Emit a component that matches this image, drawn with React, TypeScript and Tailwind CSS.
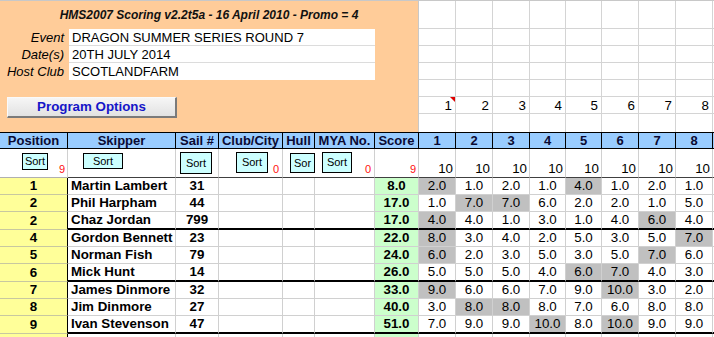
import React from "react";

const COLS =
  "grid grid-cols-[68px_108px_43px_64px_32px_60px_44px_37px_37px_37px_36px_36px_37px_37px_37px_1fr]";

type Row = {
  pos: string;
  name: string;
  sail: string;
  score: string;
  races: string[];
  thick?: boolean;
};

const data: Row[] = [
  { pos: "1", name: "Martin Lambert", sail: "31", score: "8.0", races: ["2.0*", "1.0", "2.0", "1.0", "4.0*", "1.0", "2.0", "1.0"] },
  { pos: "2", name: "Phil Harpham", sail: "44", score: "17.0", races: ["1.0", "7.0*", "7.0*", "6.0", "2.0", "2.0", "1.0", "5.0"] },
  { pos: "2", name: "Chaz Jordan", sail: "799", score: "17.0", races: ["4.0*", "4.0", "1.0", "3.0", "1.0", "4.0", "6.0*", "4.0"], thick: true },
  { pos: "4", name: "Gordon Bennett", sail: "23", score: "22.0", races: ["8.0*", "3.0", "4.0", "2.0", "5.0", "3.0", "5.0", "7.0*"] },
  { pos: "5", name: "Norman Fish", sail: "79", score: "24.0", races: ["6.0*", "2.0", "3.0", "5.0", "3.0", "5.0", "7.0*", "6.0"] },
  { pos: "6", name: "Mick Hunt", sail: "14", score: "26.0", races: ["5.0", "5.0", "5.0", "4.0", "6.0*", "7.0*", "4.0", "3.0"], thick: true },
  { pos: "7", name: "James Dinmore", sail: "32", score: "33.0", races: ["9.0*", "6.0", "6.0", "7.0", "9.0", "10.0*", "3.0", "2.0"] },
  { pos: "8", name: "Jim Dinmore", sail: "27", score: "40.0", races: ["3.0", "8.0*", "8.0*", "8.0", "7.0", "6.0", "8.0", "8.0"] },
  { pos: "9", name: "Ivan Stevenson", sail: "47", score: "51.0", races: ["7.0", "9.0", "9.0", "10.0*", "8.0", "10.0*", "9.0", "9.0"], thick: true },
];

const headers = ["Position", "Skipper", "Sail #", "Club/City", "Hull", "MYA No.", "Score", "1", "2", "3", "4", "5", "6", "7", "8"];

function SortBtn({ label, cls }: { label: string; cls: string }) {
  return (
    <div
      className={`flex shrink-0 items-center justify-center border border-black bg-[#CCFFFF] text-[11px] leading-none text-black ${cls}`}
    >
      {label}
    </div>
  );
}

function Red({ v }: { v: string }) {
  return <span className="ml-auto mb-[2px] self-end text-[11px] leading-none text-[#ff1010]">{v}</span>;
}

function DataRow({ r }: { r: Row }) {
  const h = r.thick ? "h-[18px]" : "h-[17px]";
  const cell = r.thick
    ? "border-r border-[#d0d0d0] border-b-2 border-b-black"
    : "border-r border-b border-[#d0d0d0]";
  return (
    <div className={`${COLS} ${h}`}>
      <div className="flex items-center justify-center border-r border-b border-r-black border-b-[#c8c8a0] bg-[#FFFF99] font-bold">
        {r.pos}
      </div>
      <div className={`flex items-center pl-[3px] font-bold ${cell}`}>{r.name}</div>
      <div className={`flex items-center justify-center font-bold ${cell}`}>{r.sail}</div>
      <div className={cell} />
      <div className={cell} />
      <div className={cell} />
      <div className={`flex items-center justify-center bg-[#CCFFCC] font-bold ${cell}`}>{r.score}</div>
      {r.races.map((v, i) => {
        const g = v.endsWith("*");
        return (
          <div
            key={i}
            className={`flex items-center justify-center ${g ? "bg-[#C0C0C0]" : "bg-white"} ${cell}`}
          >
            {g ? v.slice(0, -1) : v}
          </div>
        );
      })}
      <div className={r.thick ? "border-b-2 border-b-black" : "border-b border-[#d0d0d0]"} />
    </div>
  );
}

export default function App() {
  const gridRows = [0, 1, 2, 3, 4, 5, 6];
  const gridCols = [0, 1, 2, 3, 4, 5, 6, 7, 8];
  return (
    <div className="h-[337px] w-[714px] overflow-hidden bg-white font-['Liberation_Sans',Arial,sans-serif] text-[13.33px] leading-none text-black">
      {/* Top section */}
      <div className="flex h-[132px] border-t border-[#c8c8c8]">
        <div className="flex w-[419px] shrink-0 flex-col border-r border-[#c8c8c8] bg-[#FFCC99]">
          <div className="flex h-[28px] items-center justify-center text-[12px] font-bold italic text-[#111111]">
            HMS2007 Scoring v2.2t5a - 16 April 2010 - Promo = 4
          </div>
          {[
            ["Event", "DRAGON SUMMER SERIES ROUND 7"],
            ["Date(s)", "20TH JULY 2014"],
            ["Host Club", "SCOTLANDFARM"],
          ].map(([l, v], i) => (
            <div key={i} className="flex h-[17px]">
              <div className="flex w-[68px] items-center justify-end pr-[4px] text-[13px] italic">{l}</div>
              <div
                className={`ml-[1px] flex w-[306px] items-center bg-white pl-[3px] text-[13px] ${
                  i < 2 ? "border-b border-[#dcdcdc]" : ""
                }`}
              >
                {v}
              </div>
            </div>
          ))}
          <div className="h-[17px]" />
          <div className="ml-[7px] flex h-[21px] w-[170px] items-center justify-center border border-t-[#fafafa] border-l-[#fafafa] border-r-2 border-b-2 border-r-[#7a7a7a] border-b-[#7a7a7a] bg-linear-to-b from-[#f6f6f6] to-[#e2e2e2] text-[13.33px] font-bold text-[#1616c8]">
            Program Options
          </div>
        </div>
        <div className="grid flex-1 grid-cols-[37px_37px_37px_36px_36px_37px_37px_37px_1fr] grid-rows-[28px_17px_17px_17px_17px_17px_18px]">
          {gridRows.map((r) =>
            gridCols.map((c) => {
              const br = c < 8 ? "border-r" : "";
              const bb = r < 6 ? "border-b" : "";
              return (
                <div
                  key={`${r}-${c}`}
                  className={`relative flex items-center justify-end border-[#d4d4d4] pr-[3px] pt-[1px] ${br} ${bb}`}
                >
                  {r === 5 && c < 8 ? String(c + 1) : null}
                  {r === 5 && c === 0 ? (
                    <svg className="absolute top-0 right-0" width="5" height="5" viewBox="0 0 5 5">
                      <polygon points="0,0 5,0 5,5" fill="#e00000" />
                    </svg>
                  ) : null}
                </div>
              );
            })
          )}
        </div>
      </div>

      {/* Header row */}
      <div className={`${COLS} h-[17px] border-y border-black bg-[#99CCFF]`}>
        {headers.map((h, i) => (
          <div
            key={i}
            className="flex items-center justify-center border-r border-black text-[13px] font-bold text-[#0a0a33]"
          >
            {h}
          </div>
        ))}
        <div />
      </div>

      {/* Sort row */}
      <div className={`${COLS} h-[29px]`}>
        <div className="flex border-r border-b border-r-[#d0d0d0] border-b-[#b0b0b0] pl-[22px] pr-[2px]">
          <SortBtn label="Sort" cls="mt-[4px] h-[17px] w-[26px]" />
          <Red v="9" />
        </div>
        <div className="flex border-r border-b border-r-[#d0d0d0] border-b-[#404040] pl-[15px]">
          <SortBtn label="Sort" cls="mt-[4px] h-[16px] w-[40px]" />
        </div>
        <div className="flex border-r border-b border-r-[#d0d0d0] border-b-[#404040] pl-[4px]">
          <SortBtn label="Sort" cls="mt-[3px] h-[22px] w-[32px]" />
        </div>
        <div className="flex border-r border-b border-r-[#d0d0d0] border-b-[#404040] pl-[17px] pr-[3px]">
          <SortBtn label="Sort" cls="mt-[3px] h-[21px] w-[32px]" />
          <Red v="0" />
        </div>
        <div className="flex border-b border-b-[#404040] pl-[7px]">
          <SortBtn label="Sor" cls="mt-[4px] h-[20px] w-[25px]" />
        </div>
        <div className="flex border-r border-b border-r-[#d0d0d0] border-b-[#404040] pl-[7px] pr-[3px]">
          <SortBtn label="Sort" cls="mt-[3px] h-[21px] w-[30px]" />
          <Red v="0" />
        </div>
        <div className="flex border-r border-b border-r-[#d0d0d0] border-b-[#404040] pr-[2px]">
          <Red v="9" />
        </div>
        {[0, 1, 2, 3, 4, 5, 6, 7].map((i) => (
          <div
            key={i}
            className="flex items-end justify-end border-r border-b border-r-[#d0d0d0] border-b-[#404040] pr-[2px] pb-[2px]"
          >
            10
          </div>
        ))}
        <div className="border-b border-b-[#404040]" />
      </div>

      {/* Data rows */}
      {data.map((r, i) => (
        <DataRow key={i} r={r} />
      ))}

      {/* Trailing partial row */}
      <div className={`${COLS} h-[17px]`}>
        <div className="border-r border-r-black bg-[#FFFF99]" />
        <div className="border-r border-[#d0d0d0]" />
        <div className="border-r border-[#d0d0d0]" />
        <div className="border-r border-[#d0d0d0]" />
        <div className="border-r border-[#d0d0d0]" />
        <div className="border-r border-[#d0d0d0]" />
        <div className="border-r border-[#d0d0d0] bg-[#CCFFCC]" />
        {[0, 1, 2, 3, 4, 5, 6, 7].map((i) => (
          <div key={i} className="border-r border-[#d0d0d0]" />
        ))}
        <div />
      </div>
    </div>
  );
}
